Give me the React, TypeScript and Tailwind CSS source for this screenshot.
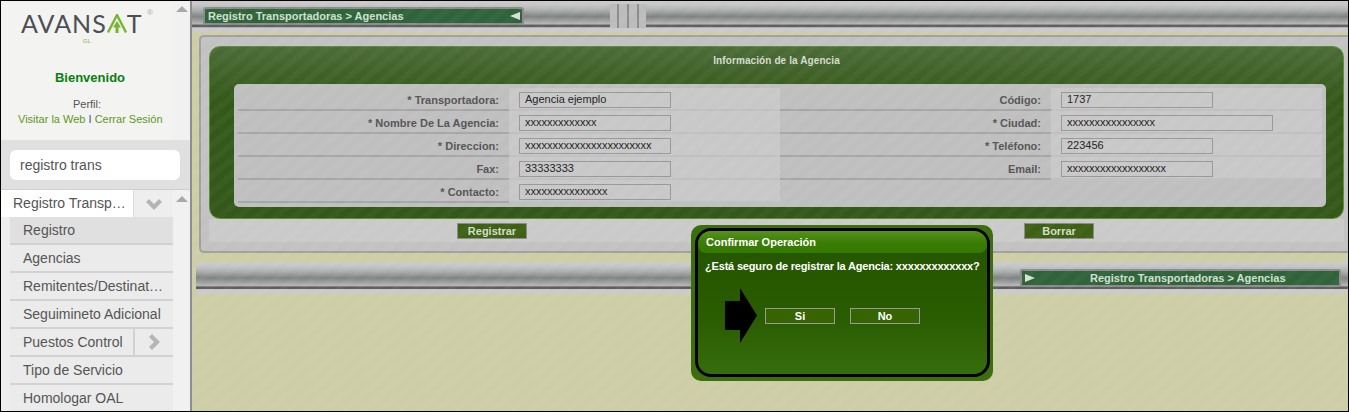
const arial = "font-['Liberation_Sans',Arial,sans-serif]"

const menuItems = [
  { label: "Registro", active: true },
  { label: "Agencias" },
  { label: "Remitentes/Destinatarios" },
  { label: "Seguimineto Adicional" },
  { label: "Puestos Control", more: true },
  { label: "Tipo de Servicio" },
  { label: "Homologar OAL" },
]

const rows = [
  { left: "* Transportadora:", leftValue: "Agencia ejemplo", right: "Código:", rightValue: "1737" },
  { left: "* Nombre De La Agencia:", leftValue: "xxxxxxxxxxxxx", right: "* Ciudad:", rightValue: "xxxxxxxxxxxxxxxx", wide: true },
  { left: "* Direccion:", leftValue: "xxxxxxxxxxxxxxxxxxxxxxx", right: "* Teléfono:", rightValue: "223456" },
  { left: "Fax:", leftValue: "33333333", right: "Email:", rightValue: "xxxxxxxxxxxxxxxxxx" },
  { left: "* Contacto:", leftValue: "xxxxxxxxxxxxxxx" },
]

function ScrollArrow() {
  return <div className="mx-auto h-0 w-0 border-x-[6px] border-b-[6px] border-x-transparent border-b-[#a9a9a9]" />
}

function ChevronGlyph({ dir }: { dir: "down" | "right" }) {
  return (
    <svg width="16" height="16" viewBox="0 0 16 16" className={dir === "right" ? "-rotate-90" : ""}>
      <path d="M0 6 3 3 8 8 13 3 16 6 8 14Z" fill="#b5b5b5" />
    </svg>
  )
}

function Logo() {
  return (
    <div className="flex h-[41px] flex-col items-center pt-[5px]">
      <div className="relative mr-[6px] flex h-[24px] w-[126px] items-center">
        <span className="font-['Lato',sans-serif] text-[25px] leading-none tracking-[1px] text-[#4b4f54]">AVANS</span>
        <svg width="20" height="19" viewBox="0 0 20 19" className="shrink-0">
          <path d="M1 18.5 10 1 19 18.5" fill="none" stroke="#79b52f" strokeWidth="2.4" />
          <path d="M10 7 6 13.5H8.5V19H11.5V13.5H14Z" fill="#79b52f" />
        </svg>
        <span className="font-['Lato',sans-serif] text-[25px] leading-none text-[#4b4f54]">T</span>
        <span className="absolute top-[-4px] right-[-6px] text-[8px] text-[#aaa]">®</span>
      </div>
      <span className="mt-[1px] text-[6px] leading-[10px] font-bold text-[#a8c878]">GL</span>
    </div>
  )
}

function Sidebar() {
  return (
    <aside className={`${arial} flex h-full w-[189px] shrink-0 flex-col overflow-hidden bg-[#eeeeee]`}>
      <div className="flex h-[139px] shrink-0">
        <div className="w-[172px] bg-[#f3f3f1] pt-[5px] text-center">
          <Logo />
          <div className="mt-[22px] ml-[6px] text-[13px] leading-[18px] font-bold text-[#0b7d12]">Bienvenido</div>
          <div className="mt-[10px] text-[11px] leading-[14px] text-[#555]">Perfil:</div>
          <div className="mt-[1px] ml-[17px] w-[155px] text-left text-[11px] leading-[14px] whitespace-nowrap text-[#5b9a1c]">
            Visitar la Web <span className="text-[#3a5a8c]">I</span> Cerrar Sesión
          </div>
        </div>
        <div className="w-[17px] bg-[#f1f1f1] pt-[5px]"><ScrollArrow /></div>
      </div>
      <div className="h-[50px] shrink-0 border-b border-[#cfcfcf] bg-[#e0e0e0] px-[9px] pt-[10px]">
        <div className="flex h-[30px] w-[170px] items-center rounded-[6px] bg-white px-[10px] text-[14px] text-[#555]">registro trans</div>
      </div>
      <div className="flex min-h-0 flex-1">
        <div className="w-[172px] bg-[#eeeeee]">
          <div className="flex h-[27px] items-center bg-white text-[14px] text-[#555]">
            <span className="w-[133px] truncate border-r border-[#dddddd] pr-[5px] pl-[12px] leading-[27px]">Registro Transportadoras</span>
            <div className="flex h-full flex-1 items-center justify-center bg-[#eeeeee]">
              <ChevronGlyph dir="down" />
            </div>
          </div>
          <div className="ml-[9px]">
            {menuItems.map((item) => (
              <div
                key={item.label}
                className={`flex h-[28px] items-center border-b-2 border-[#d2d2d2] text-[14px] text-[#555] ${item.active ? "bg-[#e0e0e0]" : "bg-[#ebebeb]"}`}
              >
                <span className={`truncate pl-[13px] ${item.more ? "w-[123px]" : "w-full pr-[9px]"}`}>{item.label}</span>
                {item.more && (
                  <div className="flex h-full flex-1 items-center justify-center border-l-2 border-[#d2d2d2]">
                    <ChevronGlyph dir="right" />
                  </div>
                )}
              </div>
            ))}
          </div>
        </div>
        <div className="w-[17px] bg-[#f1f1f1] pt-[6px]"><ScrollArrow /></div>
      </div>
    </aside>
  )
}

function Field({ value, wide }: { value: string; wide?: boolean }) {
  return (
    <div className={`h-[16px] border border-[#989898] pl-[5px] text-[11px] leading-[13px] font-normal text-[#222] ${wide ? "w-[212px]" : "w-[152px]"}`}>
      {value}
    </div>
  )
}

function FormRow({ row }: { row: (typeof rows)[number] }) {
  return (
    <div className="flex h-[23px] text-[11px] font-bold text-[#555]">
      <div className="flex w-[271px] items-center justify-end border-b-2 border-[#a6a6a6] pt-[4px] pr-[10px]">{row.left}</div>
      <div className="flex w-[271px] items-center border-b-2 border-[#c0c0c0] bg-[#c8c8c8] pt-[2px] pl-[10px]">
        <Field value={row.leftValue} />
      </div>
      {row.right ? (
        <>
          <div className="flex w-[271px] items-center justify-end border-b-2 border-[#a6a6a6] pt-[4px] pr-[10px]">{row.right}</div>
          <div className="flex flex-1 items-center border-b-2 border-[#c0c0c0] bg-[#c8c8c8] pt-[2px] pl-[10px]">
            <Field value={row.rightValue} wide={row.wide} />
          </div>
        </>
      ) : null}
    </div>
  )
}

function MetalBar({ children, className }: { children: React.ReactNode; className: string }) {
  return (
    <div className={`shrink-0 bg-[linear-gradient(180deg,#cbcbcb_0,#c6c6c6_12%,#b0b2b2_28%,#7f8383_50%,#9a9c9c_62%,#b6b6b6_74%,#5e5e5e_78%,#5e5e5e_84%,#cacaca_86%,#cacaca_100%)] ${className}`}>
      {children}
    </div>
  )
}

function ActionButton({ label }: { label: string }) {
  return (
    <button className="h-[16px] w-[70px] border border-[#8a8a8a] bg-[#3d6013] text-center text-[11px] leading-[14px] font-bold text-[#d3dcc8]">
      {label}
    </button>
  )
}

function ConfirmDialog() {
  return (
    <div className={`${arial} absolute top-[224px] left-[690px] z-20 h-[156px] w-[302px] rounded-[10px] bg-[#3c6e0e] pt-[3px] pr-[3px] pb-[4px] pl-[4px] text-white`}>
      <div className="flex h-full flex-col overflow-hidden rounded-[16px] border-[3px] border-black bg-[linear-gradient(180deg,#245400_0,#2a5c02_60%,#366d0c_100%)]">
        <div className="h-[22px] shrink-0 rounded-b-[8px] bg-[linear-gradient(180deg,#55921f_0,#3a7c04_55%,#347a00_100%)] pl-[8px] text-[11px] leading-[22px] font-bold">
          Confirmar Operación
        </div>
        <div className="mt-[5px] pl-[7px] text-[11px] leading-[16px] font-bold tracking-[-0.18px] whitespace-nowrap">¿Está seguro de registrar la Agencia: xxxxxxxxxxxxx?</div>
        <div className="mt-[14px] ml-[27px] flex items-center">
          <svg width="32" height="55" viewBox="0 0 32 55" className="shrink-0">
            <path d="M0 13H15V0L32 27.5 15 55V42H0Z" fill="#000" />
          </svg>
          <button className="ml-[8px] h-[16px] w-[70px] border border-[#9a9a9a] bg-[#356400] text-[11px] leading-[14px] font-bold">Si</button>
          <button className="ml-[15px] h-[16px] w-[70px] border border-[#9a9a9a] bg-[#356400] text-[11px] leading-[14px] font-bold">No</button>
        </div>
      </div>
    </div>
  )
}

function Main() {
  return (
    <main className={`${arial} relative flex min-w-0 flex-1 flex-col overflow-hidden border-l-2 border-[#8f8f8f] bg-[#cdcda6]`}>
      <MetalBar className="flex h-[31px] items-start pl-[11px]">
        <div className="mt-[6px] flex h-[18px] w-[321px] items-center justify-between rounded-t-[3px] border-[2px] border-[#8b8b8b] bg-[#2f6339] pr-[2px] pl-[3px] text-[11px] font-bold text-[#cfe0d0]">
          Registro Transportadoras &gt; Agencias
          <span className="h-0 w-0 border-y-[4px] border-r-[10px] border-y-transparent border-r-[#d8e0d8]" />
        </div>
        <div className="mt-[3px] ml-[86px] flex h-[24px] w-[36px] justify-between bg-[#bcbcbc] px-[7px]">
          <span className="w-[2px] bg-[#8a8d8d]" />
          <span className="w-[2px] bg-[#8a8d8d]" />
          <span className="w-[2px] bg-[#8a8d8d]" />
        </div>
      </MetalBar>

      <div className="mt-[3px] ml-[7px] h-[218px] shrink-0 rounded-l-[5px] border-y-2 border-l-2 border-[#a0a0a0] bg-[#c2c2c2] pt-[9px] pr-[4px] pl-[8px]">
        <div className="h-[173px] rounded-[11px] border border-[#5b8f2c] bg-[linear-gradient(180deg,#4c6c38_0,#35591a_30%,#33581a_100%)] pr-[17px] pb-[12px] pl-[24px]">
          <div className="mr-[7px] h-[37px] pt-[7px] text-center text-[10px] leading-[14px] font-bold tracking-[0.1px] text-[#d6dccf]">Información de la Agencia</div>
          <div className="h-[123px] rounded-[5px] bg-[#bfbfbf] px-[4px] pt-[4px]">
            {rows.map((row) => (
              <FormRow key={row.left} row={row} />
            ))}
          </div>
        </div>
        <div className="flex h-[23px] justify-between bg-[#cacaca] pt-[4px] pr-[250px] pl-[248px]">
          <ActionButton label="Registrar" />
          <ActionButton label="Borrar" />
        </div>
      </div>

      <MetalBar className="mt-[9px] ml-[4px] flex h-[32px] justify-end pt-[7px] pr-[7px]">
        <div className="flex h-[18px] w-[321px] items-center rounded-[2px] border-[2px] border-[#8b8b8b] bg-[#2f6339] pl-[3px] text-[11px] font-bold text-[#cfe0d0]">
          <span className="h-0 w-0 border-y-[4px] border-l-[10px] border-y-transparent border-l-[#d8e0d8]" />
          <span className="ml-[55px]">Registro Transportadoras &gt; Agencias</span>
        </div>
      </MetalBar>

      {/* stripes over the whole content area */}
      <div className="pointer-events-none absolute inset-0 z-10 bg-[repeating-linear-gradient(140deg,rgba(255,255,255,0.03)_0,rgba(255,255,255,0.03)_6px,transparent_6px,transparent_12px)]" />
    </main>
  )
}

export default function App() {
  return (
    <div className="relative h-[412px] w-[1349px] overflow-hidden border border-black">
      <div className="flex h-full">
        <Sidebar />
        <Main />
      </div>
      <ConfirmDialog />
    </div>
  )
}
